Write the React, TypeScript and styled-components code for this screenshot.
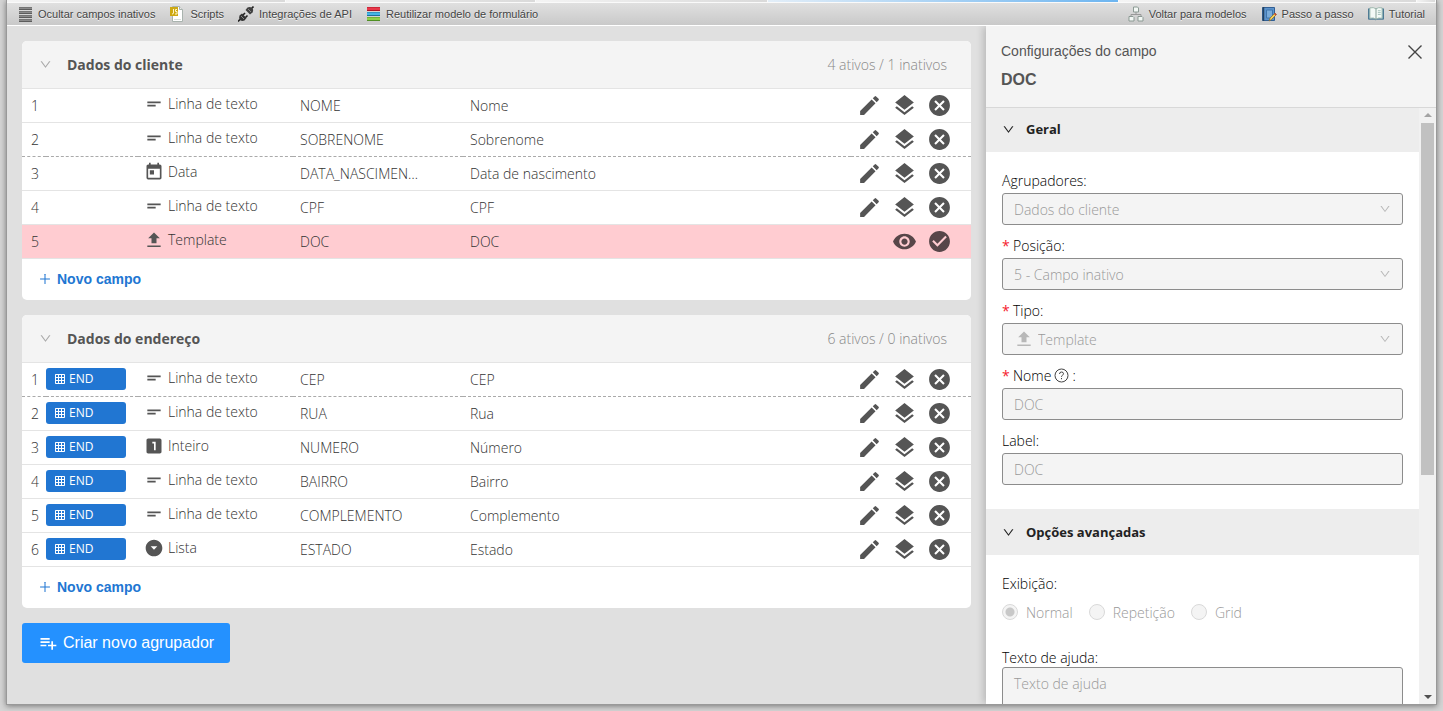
import React from "react";
import styled, { createGlobalStyle } from "styled-components";
import { AiOutlineDown, AiOutlinePlus } from "react-icons/ai";
import {
  MdArrowDropDownCircle,
  MdCancel,
  MdCheckCircle,
  MdEdit,
  MdGridOn,
  MdLayers,
  MdLooksOne,
  MdPlaylistAdd,
  MdShortText,
  MdToday,
  MdVisibility,
} from "react-icons/md";

const arial = `"Liberation Sans", Arial, sans-serif`;
const humanist = `"Open Sans", "Noto Sans", sans-serif`;

const GlobalStyle = createGlobalStyle`
  * { box-sizing: border-box; }
  body { margin: 0; background: #d5d5d5; font-family: ${humanist}; font-size: 14px; font-weight: 300; color: #333; overflow: hidden; }
  button, input, select, textarea { font: inherit; color: inherit; }
  svg { display: block; flex: none; }
`;

const Page = styled.div`
  height: 100vh;
  padding: 0 6px 6px;
  display: flex;
`;

const Window = styled.div`
  flex: 1;
  min-width: 0;
  display: flex;
  flex-direction: column;
  border: solid #999;
  border-width: 0 1px 1px;
  background: #e0e0e0;
  box-shadow: 0 1px 6px rgba(0, 0, 0, 0.45);
`;

const TabStrip = styled.div`
  height: 3px;
  display: flex;
  background: #fafafa;
  border-bottom: 1px solid #fafafa;
`;

const TabEdge = styled.span<{ $active?: boolean; $grow: number }>`
  flex: ${(p) => p.$grow} 1 0;
  height: 2px;
  margin-right: 1px;
  background: linear-gradient(90deg, ${(p) => (p.$active ? "#e3eef8, #6db5f0" : "#f4f4f4, #dadada")});
`;

const Toolbar = styled.nav`
  height: 23px;
  flex: none;
  display: flex;
  align-items: center;
  padding: 0 11px;
  gap: 14px;
  background: linear-gradient(#e0e0e0, #c9c9c9);
  border-bottom: 1px solid #fff;
`;

const ToolButton = styled.button<{ $push?: boolean }>`
  display: flex;
  align-items: center;
  gap: 5px;
  padding: 0;
  border: 0;
  background: none;
  font-family: ${arial};
  font-size: 11px;
  font-weight: 400;
  color: #444;
  white-space: nowrap;
  text-shadow: 0 1px 0 #f4f4f4;
  margin-left: ${(p) => (p.$push ? "auto" : "0")};
`;

const Body = styled.div`
  flex: 1;
  min-height: 0;
  display: flex;
`;

const Main = styled.main`
  flex: 1;
  min-width: 0;
  padding: 15px;
  display: flex;
  flex-direction: column;
  align-items: stretch;
  gap: 15px;
  overflow: hidden;
`;

const Card = styled.section`
  background: #fff;
  border-radius: 5px;
  overflow: hidden;
  flex: none;
`;

const CardHeader = styled.header`
  height: 48px;
  display: flex;
  align-items: center;
  padding: 0 24px 0 17px;
  background: #f4f4f4;
  border-bottom: 1px solid #e4e4e4;
`;

const Collapse = styled.button<{ $dark?: boolean }>`
  display: flex;
  padding: 0;
  border: 0;
  background: none;
  color: ${(p) => (p.$dark ? "#222" : "#aaa")};
`;

const CardTitle = styled.h2`
  margin: 0 auto 0 15px;
  font-size: 14px;
  line-height: 20px;
  font-weight: 700;
  color: #555;
`;

const CardCount = styled.span`
  color: #888;
`;

const FieldTable = styled.table`
  width: 100%;
  border-collapse: separate;
  border-spacing: 0;
  table-layout: fixed;
`;

const Row = styled.tr<{ $inactive?: boolean; $dashed?: boolean }>`
  height: 34px;
  background: ${(p) => (p.$inactive ? "#ffccd1" : "#fff")};
  td { border-bottom: 1px ${(p) => (p.$dashed ? "dashed #aaa" : "solid #e4e4e4")}; }
`;

const Cell = styled.td`
  padding: 1px 7px 0;
  line-height: 20px;
  white-space: nowrap;
  overflow: hidden;
  text-overflow: ellipsis;
`;

const NumberCell = styled(Cell)`
  padding: 0 0 0 9px;
`;

const TagCell = styled(Cell)`
  padding: 0 0 2px;
`;

const NameCell = styled(Cell)`
  padding: 1px 44px 0 7px;
`;

const ActionCell = styled(Cell)`
  padding: 0 7px;
`;

const Tag = styled.span`
  width: 80px;
  height: 22px;
  padding: 0 8px;
  display: flex;
  align-items: center;
  gap: 3px;
  border-radius: 3px;
  background: #2176d2;
  color: #fff;
  font-size: 12px;
  font-weight: 400;
`;

const TypeLabel = styled.span`
  display: flex;
  align-items: center;
  gap: 4px;
  padding-bottom: 3px;
  svg { color: #555; }
`;

const TypeCell = styled(Cell)`
  padding: 0 6px;
`;

const Actions = styled.div<{ $inactive?: boolean }>`
  display: flex;
  justify-content: flex-end;
  gap: 10px;
  padding-right: 12px;
  color: ${(p) => (p.$inactive ? "#574649" : "#555")};
`;

const IconButton = styled.button`
  display: flex;
  padding: 0;
  border: 0;
  background: none;
`;

const AddField = styled.button`
  height: 41px;
  padding: 0 16px 2px;
  display: flex;
  align-items: center;
  gap: 5px;
  border: 0;
  background: none;
  color: #2176d2;
  font-family: ${arial};
  font-weight: 700;
  font-size: 14px;
`;

const CreateGroup = styled.button`
  align-self: flex-start;
  height: 40px;
  padding: 0 16px;
  display: flex;
  align-items: center;
  gap: 5px;
  border: 0;
  border-radius: 3px;
  background: #2491ff;
  color: #fff;
  font-family: ${arial};
  font-size: 16px;
  font-weight: 400;
`;

const Panel = styled.aside`
  flex: 0 0 450px;
  display: flex;
  flex-direction: column;
  background: #fff;
  box-shadow: -2px 0 8px rgba(0, 0, 0, 0.2);
  clip-path: inset(0 0 0 -10px);
`;

const PanelHeader = styled.header`
  flex: none;
  height: 82px;
  padding: 15px 14px 0 15px;
  display: flex;
  justify-content: space-between;
  background: #f4f4f4;
  border-bottom: 1px solid #d8d8d8;
  font-family: ${arial};
  color: #555;
`;

const PanelTitle = styled.h1`
  margin: 0;
  font-size: 14px;
  line-height: 20px;
  font-weight: 400;
`;

const PanelField = styled.p`
  margin: 9px 0 0;
  font-size: 16px;
  line-height: 20px;
  font-weight: 700;
`;

const CloseButton = styled(IconButton)`
  align-self: flex-start;
  margin-top: 4px;
  color: #444;
`;

const PanelBody = styled.div`
  flex: 1;
  min-height: 0;
  display: flex;
`;

const PanelContent = styled.form`
  flex: 1;
  min-width: 0;
  overflow: hidden;
`;

const SectionBar = styled.div<{ $first?: boolean }>`
  height: ${(p) => (p.$first ? 44 : 46)}px;
  padding: 0 16px ${(p) => (p.$first ? 2 : 0)}px;
  display: flex;
  align-items: center;
  gap: 11px;
  background: #ededed;
`;

const SectionTitle = styled.h2`
  margin: 0;
  font-size: 13px;
  line-height: 20px;
  font-weight: 700;
  color: #222;
`;

const Fields = styled.div`
  padding: 16px;
  display: flex;
  flex-direction: column;
`;

const FieldBox = styled.div`
  height: 65px;
`;

const Label = styled.label<{ $tight?: boolean }>`
  height: ${(p) => (p.$tight ? 20 : 25)}px;
  display: flex;
  align-items: center;
  gap: 3px;
  color: #000;
`;

const Required = styled.span`
  width: 8px;
  color: #f5222d;
  font-weight: 400;
`;

const ControlBox = styled.div`
  height: 32px;
  padding: 0 11px;
  display: flex;
  align-items: center;
  gap: 4px;
  border: 1px solid #8c8c8c;
  border-radius: 3px;
  background: #f4f4f4;
  color: #999;
  svg { color: #b8b8b8; }
`;

const SelectInput = styled.select`
  appearance: none;
  flex: 1;
  min-width: 0;
  padding: 0;
  border: 0;
  background: none;
  opacity: 1;
`;

const TextInput = styled.input`
  flex: 1;
  min-width: 0;
  padding: 0;
  border: 0;
  background: none;
`;

const HelpArea = styled.textarea`
  display: block;
  width: 100%;
  height: 80px;
  padding: 6px 11px;
  border: 1px solid #8c8c8c;
  border-radius: 3px;
  background: #f4f4f4;
  resize: none;
  line-height: 20px;
  &::placeholder { color: #999; }
`;

const RadioSet = styled.fieldset`
  height: 76px;
  margin: 0;
  padding: 0;
  border: 0;
`;

const Legend = styled.legend`
  height: 25px;
  padding: 0;
  line-height: 25px;
  color: #000;
`;

const RadioRow = styled.div`
  display: flex;
  gap: 16px;
  height: 32px;
  align-items: center;
`;

const RadioLabel = styled.label`
  display: flex;
  align-items: center;
  gap: 8px;
  color: #999;
`;

const Radio = styled.input`
  appearance: none;
  width: 16px;
  height: 16px;
  margin: 0;
  border: 1px solid #d9d9d9;
  border-radius: 50%;
  background: #f4f4f4;
  &:checked { background: radial-gradient(circle, #c8c8c8 4px, #f4f4f4 5px); }
`;

const ScrollTrack = styled.div`
  width: 17px;
  padding: 5px 2px;
  display: flex;
  flex-direction: column;
  align-items: center;
  background: #f1f1f1;
`;

const ScrollThumb = styled.div`
  flex: 0 0 60%;
  align-self: stretch;
  margin: 6px 0 auto;
  background: #c1c1c1;
`;

const BarsIcon = ({ colors }: { colors: [string, string][] }) => {
  const step = colors.length > 3 ? 4 : 5;
  return (
    <svg width="15" height="16" viewBox="0 0 15 16">
      {colors.map(([fill, edge], i) => (
        <g key={i}>
          <rect x="1" y={1 + i * step} width="13" height={step - 1} fill={fill} />
          <path d={`M1 ${step - 0.5 + i * step}h13`} stroke={edge} />
          <path d={`M1 ${1.5 + i * step}h13`} stroke={edge} strokeOpacity=".45" />
        </g>
      ))}
    </svg>
  );
};

const ScriptIcon = () => (
  <svg width="16" height="16" viewBox="0 0 16 16">
    <path d="M3.500 .5h7l3 3v12h-10z" fill="#fff" stroke="#a9b3ae" />
    <path d="M10.500 .5v3h3" fill="#e8e8e8" stroke="#a9b3ae" />
    <path d="M5 13.500h7" stroke="#d7e0db" />
    <rect x="1" y="1" width="8" height="9" fill="#cda812" />
    <path d="M4.500 3v4q0 1-1.500 1M8 3.500H6.500v2H8V8H6" fill="none" stroke="#fff6c9" />
  </svg>
);

const PlugIcon = () => (
  <svg width="16" height="16" viewBox="0 0 16 16">
    <path d="M0 15.500L2.500 13M13.500 2.500L15.500.5" stroke="#222" strokeWidth="1.600" />
    <path d="M1.500 9.500l2.500-2L8.500 12l-2 2.500q-2.500 1-4.500-.500-1.500-2-.500-4.500z" fill="#333" />
    <path d="M9.500 1.500q2.500-1 4.500.500t.5 4.500l-2.500 2L7.500 4z" fill="#404040" />
    <path d="M5 9l2-2M7.500 11.500l2-2" stroke="#222" strokeWidth="1.600" />
    <path d="M3 10l3 3M10 3l3 3" stroke="#888" />
  </svg>
);

const TreeIcon = () => (
  <svg width="16" height="16" viewBox="0 0 16 16">
    <path d="M8 6v3M3 11V8.500h10V11" fill="none" stroke="#999" />
    <g fill="#f3f8f5" stroke="#8b9993">
      <path d="M5.500 1h4l1 1v4h-5zM1 10.500h4l1 1V15H1zM10 10.500h4l1 1V15h-5z" />
    </g>
  </svg>
);

const NotebookIcon = () => (
  <svg width="16" height="16" viewBox="0 0 16 16">
    <path d="M1.500 1.500h12v13h-12z" fill="#5b92cb" stroke="#315f94" />
    <path d="M2.500 1v14" stroke="#24425f" strokeWidth="1.500" />
    <path d="M5.500 4h6v8h-6z" fill="#79abd9" stroke="#3f75ac" />
    <path d="M8 15l1-3 5-5 1.500 1.500-5 5z" fill="#f5cf54" stroke="#80652e" strokeWidth=".7" />
    <path d="M13.500 7.500L15 9" stroke="#c84335" strokeWidth="1.500" />
  </svg>
);

const BookIcon = () => (
  <svg width="16" height="16" viewBox="0 0 17 16">
    <path d="M.5 2.500h16v11h-7l-1 1-1-1h-7z" fill="#6c9db9" stroke="#47748f" />
    <path d="M2 1.500q4-1 6.500 1 2.500-2 6.500-1v11q-4-1-6.500 1-2.500-2-6.500-1z" fill="#f3faf6" stroke="#9bb5ab" />
    <path d="M8.500 2.500v11" stroke="#7f9b91" />
    <path d="M10.500 4.500h3M10.500 6.500h3M10.500 8.500h3" stroke="#a1c0b8" />
  </svg>
);

const UploadIcon = () => (
  <svg width="20" height="20" viewBox="0 0 24 24" fill="currentColor">
    <path d="M9 16h6v-6h4l-7-7-7 7h4zM4 18.500h16v2H4z" />
  </svg>
);

const CloseIcon = () => (
  <svg width="14" height="14" viewBox="0 0 14 14" stroke="currentColor" strokeWidth="1.400">
    <path d="M.5.5l13 13M13.500.5l-13 13" />
  </svg>
);

const HelpIcon = () => (
  <svg width="15" height="15" viewBox="0 0 15 15" fill="none" stroke="#444">
    <circle cx="7.500" cy="7.500" r="6.500" />
    <path d="M5.500 6q0-2 2-2t2 1.700q0 1-1 1.500t-1 1.600M7.500 10v1.200" />
  </svg>
);

const typeIcons = {
  "Linha de texto": <MdShortText size={20} />,
  Data: <MdToday size={20} />,
  Template: <UploadIcon />,
  Inteiro: <MdLooksOne size={20} />,
  Lista: <MdArrowDropDownCircle size={20} />,
};

type Field = {
  type: keyof typeof typeIcons;
  name: string;
  label: string;
  tag?: string;
  dashed?: boolean;
  inactive?: boolean;
};

const clientFields: Field[] = [
  { type: "Linha de texto", name: "NOME", label: "Nome" },
  { type: "Linha de texto", name: "SOBRENOME", label: "Sobrenome", dashed: true },
  { type: "Data", name: "DATA_NASCIMENTO", label: "Data de nascimento" },
  { type: "Linha de texto", name: "CPF", label: "CPF" },
  { type: "Template", name: "DOC", label: "DOC", inactive: true },
];

const addressFields: Field[] = [
  { type: "Linha de texto", name: "CEP", label: "CEP", tag: "END", dashed: true },
  { type: "Linha de texto", name: "RUA", label: "Rua", tag: "END" },
  { type: "Inteiro", name: "NUMERO", label: "Número", tag: "END" },
  { type: "Linha de texto", name: "BAIRRO", label: "Bairro", tag: "END" },
  { type: "Linha de texto", name: "COMPLEMENTO", label: "Complemento", tag: "END" },
  { type: "Lista", name: "ESTADO", label: "Estado", tag: "END" },
];

const Group = ({ title, count, fields }: { title: string; count: string; fields: Field[] }) => (
  <Card>
    <CardHeader>
      <Collapse aria-label={"Recolher " + title}>
        <AiOutlineDown size={13} />
      </Collapse>
      <CardTitle>{title}</CardTitle>
      <CardCount>{count}</CardCount>
    </CardHeader>
    <FieldTable>
      <colgroup>
        <col width="24" />
        <col width="92" />
        <col width="155" />
        <col width="170" />
        <col />
        <col width="120" />
      </colgroup>
      <tbody>
        {fields.map((f, i) => (
          <Row key={f.name} $dashed={f.dashed} $inactive={f.inactive}>
            <NumberCell>{i + 1}</NumberCell>
            <TagCell>
              {f.tag && (
                <Tag>
                  <MdGridOn size={12} />
                  {f.tag}
                </Tag>
              )}
            </TagCell>
            <TypeCell>
              <TypeLabel>
                {typeIcons[f.type]}
                {f.type}
              </TypeLabel>
            </TypeCell>
            <NameCell>{f.name}</NameCell>
            <Cell>{f.label}</Cell>
            <ActionCell>
              <Actions $inactive={f.inactive}>
                {f.inactive ? (
                  <>
                    <IconButton aria-label="Visualizar"><MdVisibility size={25} /></IconButton>
                    <IconButton aria-label="Ativar"><MdCheckCircle size={25} /></IconButton>
                  </>
                ) : (
                  <>
                    <IconButton aria-label="Editar"><MdEdit size={25} /></IconButton>
                    <IconButton aria-label="Duplicar"><MdLayers size={25} /></IconButton>
                    <IconButton aria-label="Inativar"><MdCancel size={25} /></IconButton>
                  </>
                )}
              </Actions>
            </ActionCell>
          </Row>
        ))}
      </tbody>
    </FieldTable>
    <AddField>
      <AiOutlinePlus size={14} />
      Novo campo
    </AddField>
  </Card>
);

const SelectField = ({ id, label, value, required, icon }: { id: string; label: string; value: string; required?: boolean; icon?: React.ReactNode }) => (
  <FieldBox>
    <Label htmlFor={id}>
      {required && <Required>*</Required>}
      {label}:
    </Label>
    <ControlBox>
      {icon}
      <SelectInput id={id} disabled>
        <option>{value}</option>
      </SelectInput>
      <AiOutlineDown size={12} />
    </ControlBox>
  </FieldBox>
);

export default function App() {
  return (
    <>
      <GlobalStyle />
      <Page>
        <Window>
          <TabStrip>
            <TabEdge $grow={279} />
            <TabEdge $grow={250} />
            <TabEdge $grow={232} />
            <TabEdge $grow={351} $active />
            <TabEdge $grow={298} />
            <TabEdge $grow={18} />
          </TabStrip>
          <Toolbar>
            <ToolButton>
              <BarsIcon colors={[["#8a8a8a", "#5c5c5c"], ["#8a8a8a", "#5c5c5c"], ["#8a8a8a", "#5c5c5c"], ["#8a8a8a", "#5c5c5c"]]} />
              Ocultar campos inativos
            </ToolButton>
            <ToolButton><ScriptIcon />Scripts</ToolButton>
            <ToolButton><PlugIcon />Integrações de API</ToolButton>
            <ToolButton>
              <BarsIcon colors={[["#e8384a", "#a81526"], ["#45b5e6", "#1d6f9c"], ["#8ed04b", "#4f8f22"]]} />
              Reutilizar modelo de formulário
            </ToolButton>
            <ToolButton $push><TreeIcon />Voltar para modelos</ToolButton>
            <ToolButton><NotebookIcon />Passo a passo</ToolButton>
            <ToolButton><BookIcon />Tutorial</ToolButton>
          </Toolbar>
          <Body>
            <Main>
              <Group title="Dados do cliente" count="4 ativos / 1 inativos" fields={clientFields} />
              <Group title="Dados do endereço" count="6 ativos / 0 inativos" fields={addressFields} />
              <CreateGroup>
                <MdPlaylistAdd size={20} />
                Criar novo agrupador
              </CreateGroup>
            </Main>
            <Panel>
              <PanelHeader>
                <div>
                  <PanelTitle>Configurações do campo</PanelTitle>
                  <PanelField>DOC</PanelField>
                </div>
                <CloseButton aria-label="Fechar"><CloseIcon /></CloseButton>
              </PanelHeader>
              <PanelBody>
                <PanelContent>
                  <SectionBar $first>
                    <Collapse type="button" $dark aria-label="Recolher Geral"><AiOutlineDown size={13} /></Collapse>
                    <SectionTitle>Geral</SectionTitle>
                  </SectionBar>
                  <Fields>
                    <SelectField id="agrupadores" label="Agrupadores" value="Dados do cliente" />
                    <SelectField id="posicao" label="Posição" value="5 - Campo inativo" required />
                    <SelectField id="tipo" label="Tipo" value="Template" required icon={<UploadIcon />} />
                    <FieldBox>
                      <Label htmlFor="nome">
                        <Required>*</Required>
                        Nome<HelpIcon />:
                      </Label>
                      <ControlBox><TextInput id="nome" defaultValue="DOC" disabled /></ControlBox>
                    </FieldBox>
                    <FieldBox>
                      <Label htmlFor="label">Label:</Label>
                      <ControlBox><TextInput id="label" defaultValue="DOC" disabled /></ControlBox>
                    </FieldBox>
                  </Fields>
                  <SectionBar>
                    <Collapse type="button" $dark aria-label="Recolher Opções avançadas"><AiOutlineDown size={13} /></Collapse>
                    <SectionTitle>Opções avançadas</SectionTitle>
                  </SectionBar>
                  <Fields>
                    <RadioSet>
                      <Legend>Exibição:</Legend>
                      <RadioRow>
                        <RadioLabel><Radio type="radio" name="exibicao" defaultChecked disabled />Normal</RadioLabel>
                        <RadioLabel><Radio type="radio" name="exibicao" disabled />Repetição</RadioLabel>
                        <RadioLabel><Radio type="radio" name="exibicao" disabled />Grid</RadioLabel>
                      </RadioRow>
                    </RadioSet>
                    <Label $tight htmlFor="ajuda">Texto de ajuda:</Label>
                    <HelpArea id="ajuda" placeholder="Texto de ajuda" disabled />
                  </Fields>
                </PanelContent>
                <ScrollTrack>
                  <svg width="8" height="4" viewBox="0 0 8 4"><path d="M4 0l4 4H0z" fill="#a3a3a3" /></svg>
                  <ScrollThumb />
                  <svg width="8" height="4" viewBox="0 0 8 4"><path d="M0 0h8L4 4z" fill="#505050" /></svg>
                </ScrollTrack>
              </PanelBody>
            </Panel>
          </Body>
        </Window>
      </Page>
    </>
  );
}
